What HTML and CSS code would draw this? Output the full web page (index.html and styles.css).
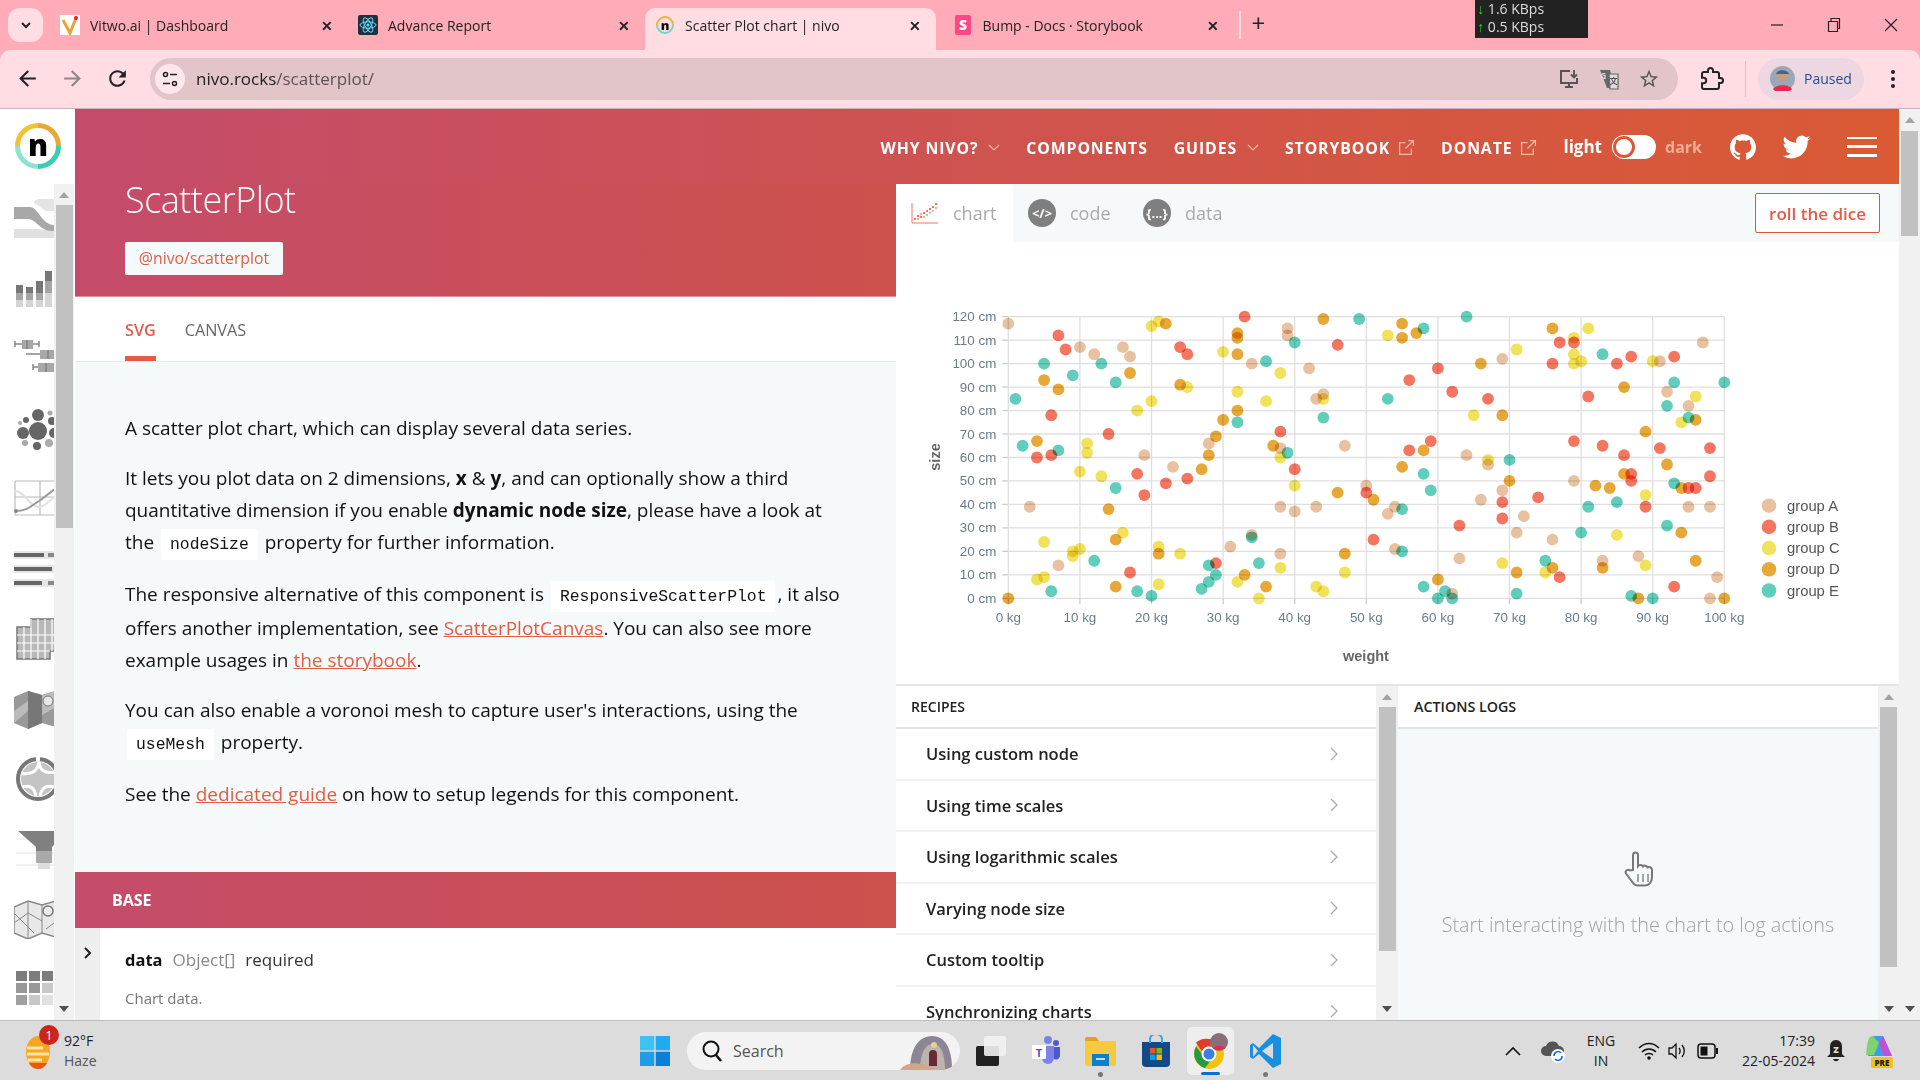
FILE: index.html
```html
<!DOCTYPE html>
<html lang="en">
<head>
    <meta charset="UTF-8">
    <meta name="viewport" content="width=device-width, initial-scale=1.0">
    <title>Scatter Plot chart | nivo</title>
    <link rel="stylesheet" href="styles.css">
</head>
<body>
    <!-- Browser tabs -->
    <div class="tabstrip">
        <div class="tab-menu"><svg width="14" height="14" viewBox="0 0 14 14"><path d="M3 5l4 4 4-4" fill="none" stroke="#222" stroke-width="2"/></svg></div>
        <div class="tab tab-first">
            <svg class="favicon" viewBox="0 0 20 20"><rect width="20" height="20" fill="#fff"/><path d="M3 5l7 13 6-15" fill="none" stroke="#e8a33a" stroke-width="3"/><circle cx="16" cy="3" r="2" fill="#d8232a"/></svg>
            <span class="tab-title">Vitwo.ai | Dashboard</span>
            <span class="tab-close">✕</span>
        </div>
        <div class="tab tab-second">
            <svg class="favicon" viewBox="0 0 20 20"><rect width="20" height="20" rx="2" fill="#20303a"/><g fill="none" stroke="#61dafb" stroke-width="1"><ellipse cx="10" cy="10" rx="8" ry="3.2"/><ellipse cx="10" cy="10" rx="8" ry="3.2" transform="rotate(60 10 10)"/><ellipse cx="10" cy="10" rx="8" ry="3.2" transform="rotate(120 10 10)"/></g><circle cx="10" cy="10" r="1.6" fill="#61dafb"/></svg>
            <span class="tab-title">Advance Report</span>
            <span class="tab-close">✕</span>
        </div>
        <div class="tab tab-active">
            <svg class="favicon" viewBox="0 0 20 20"><path d="M2 10a8 8 0 0 1 16 0" fill="none" stroke="#edb53a" stroke-width="2"/><path d="M2 10a8 8 0 0 0 16 0" fill="none" stroke="#6fd8c4" stroke-width="2"/><text x="10" y="14.5" class="favicon-n">n</text></svg>
            <span class="tab-title">Scatter Plot chart | nivo</span>
            <span class="tab-close">✕</span>
        </div>
        <div class="tab tab-last">
            <svg class="favicon" viewBox="0 0 20 20"><rect x="2" width="16" height="20" rx="2" fill="#ff4785"/><text x="10" y="15" class="favicon-s">S</text></svg>
            <span class="tab-title">Bump - Docs · Storybook</span>
            <span class="tab-close">✕</span>
        </div>
        <span class="tab-new">+</span>
        <div class="net-meter">
            <div><i class="net-down">↓</i> 1.6 KBps</div>
            <div><i class="net-up">↑</i> 0.5 KBps</div>
        </div>
        <div class="window-controls">
            <svg width="14" height="14" viewBox="0 0 14 14"><path d="M1 7h12" stroke="#222" stroke-width="1.2"/></svg>
            <svg width="14" height="16" viewBox="0 0 14 16"><path d="M1.500 4.500h9v10h-9zM4 4.500V1.500h8.500v10h-2" fill="none" stroke="#222" stroke-width="1.200"/></svg>
            <svg width="14" height="14" viewBox="0 0 14 14"><path d="M1 1l12 12M13 1L1 13" stroke="#222" stroke-width="1.2"/></svg>
        </div>
    </div>

    <!-- Browser toolbar -->
    <div class="toolbar">
        <svg class="tool-icon" viewBox="0 0 24 24"><path d="M20 11H7.830l5.590-5.590L12 4l-8 8 8 8 1.410-1.410L7.830 13H20v-2z"/></svg>
        <svg class="tool-icon tool-off" viewBox="0 0 24 24"><path d="M12 4l-1.410 1.410L16.170 11H4v2h12.170l-5.580 5.590L12 20l8-8z"/></svg>
        <svg class="tool-icon" viewBox="0 0 24 24"><path d="M17.650 6.350C16.200 4.900 14.210 4 12 4c-4.420 0-7.990 3.580-7.990 8s3.570 8 7.990 8c3.730 0 6.840-2.550 7.730-6h-2.080c-.82 2.330-3.040 4-5.650 4-3.310 0-6-2.690-6-6s2.690-6 6-6c1.660 0 3.140.69 4.220 1.780L13 11h7V4l-2.350 2.350z"/></svg>
        <div class="address-bar">
            <span class="site-info"><svg width="18" height="18" viewBox="0 0 18 18"><g fill="none" stroke="#222" stroke-width="1.500"><circle cx="4.500" cy="4.500" r="2"/><circle cx="13.500" cy="13.500" r="2"/><path d="M9 4.500h7M2 13.500h7"/></g></svg></span>
            <span class="url">nivo.rocks<span class="url-path">/scatterplot/</span></span>
            <div class="address-actions">
                <svg width="22" height="22" viewBox="0 0 22 22"><path d="M12 3H3v12h16v-5M7 19h8M11 15v4" fill="none" stroke="#555" stroke-width="2"/><path d="M16 2v7M13 6.500l3 3 3-3" fill="none" stroke="#555" stroke-width="1.800"/></svg>
                <svg width="22" height="22" viewBox="0 0 22 22"><path d="M2 2h10l5 18h-8z" fill="#666"/><path d="M11 6h9v15h-8z" fill="#ddd" stroke="#666" stroke-width="1.200"/><text x="5.500" y="11" class="translate-g">G</text><text x="15.500" y="16" class="translate-a">文</text></svg>
                <svg width="22" height="22" viewBox="0 0 24 24"><path fill="#555" d="M22 9.240l-7.190-.62L12 2 9.190 8.630 2 9.240l5.460 4.730L5.820 21 12 17.270 18.180 21l-1.630-7.030L22 9.240zM12 15.400l-3.760 2.270 1-4.280-3.320-2.880 4.380-.38L12 6.100l1.710 4.040 4.380.38-3.320 2.880 1 4.280L12 15.400z"/></svg>
            </div>
        </div>
        <svg class="extension-icon" width="24" height="24" viewBox="0 0 24 24"><path d="M20.500 11H19V7c0-1.100-.9-2-2-2h-4V3.500C13 2.120 11.880 1 10.500 1S8 2.120 8 3.500V5H4c-1.100 0-1.990.9-1.990 2v3.800H3.500c1.490 0 2.700 1.210 2.700 2.700s-1.210 2.700-2.700 2.700H2V20c0 1.100.9 2 2 2h13c1.100 0 2-.9 2-2v-4h1.500c1.380 0 2.500-1.120 2.500-2.500S21.880 11 20.500 11z" fill="none" stroke="#222" stroke-width="2"/></svg>
        <span class="toolbar-sep"></span>
        <div class="profile-pill">
            <svg width="25" height="25" viewBox="0 0 25 25"><circle cx="12.500" cy="12.500" r="12.500" fill="#9aa7b5"/><path d="M3 23c3-5 16-5 19 0a12.500 12.500 0 0 1-19 0z" fill="#e8294a"/><circle cx="12.500" cy="10" r="5" fill="#c89a80"/><path d="M6 8c2-5 11-5 13 0z" fill="#46618a"/></svg>
            <span>Paused</span>
        </div>
        <svg class="menu-dots" width="6" height="20" viewBox="0 0 6 20"><circle cx="3" cy="3" r="2" fill="#222"/><circle cx="3" cy="10" r="2" fill="#222"/><circle cx="3" cy="17" r="2" fill="#222"/></svg>
    </div>

    <div class="page">
        <!-- Component list on the left -->
        <div class="sidebar">
            <div class="logo">
                <svg width="48" height="48" viewBox="0 0 48 48">
                    <g fill="none" stroke-width="5">
                        <path d="M3.500 24A20.500 20.500 0 0 1 24 3.500" stroke="#f1c232"/>
                        <path d="M24 3.500A20.500 20.500 0 0 1 44.500 24" stroke="#e8a838"/>
                        <path d="M44.500 24A20.500 20.500 0 0 1 24 44.500" stroke="#3fcbb1"/>
                        <path d="M24 44.500A20.500 20.500 0 0 1 3.500 24" stroke="#8fe2d0"/>
                    </g>
                    <text x="24" y="34" class="logo-n">n</text>
                </svg>
            </div>
            <div class="side-scroll">
                <div class="side-icons">
                    <div class="side-icon"><svg viewBox="0 0 56 40"><path d="M20 4c0-3 3-4 6-4h30v12H32z" fill="#e4e4e4"/><path d="M0 30h24l6 1h26v8H0z" fill="#e0e0e0"/><path d="M0 8h16c8 0 12 18 24 18h16v6H38C26 32 22 20 14 20H0z" fill="#a8a8a8"/></svg></div>
                    <div class="side-icon"><svg viewBox="0 0 56 40"><path d="M2 16h7v8H2zM12 18h7v6h-7zM22 12h7v12h-7zM31 2h7v10h-7zM40 8h7v16h-7z" fill="#777"/><path d="M2 24h7v7H2zM12 24h7v7h-7zM22 24h7v7h-7zM31 12h7v12h-7zM40 24h7v7h-7z" fill="#a5a5a5"/><path d="M2 31h7v7H2zM12 31h7v7h-7zM22 31h7v7h-7zM31 24h7v14h-7zM40 31h7v7h-7z" fill="#d5d5d5"/></svg></div>
                    <div class="side-icon"><svg viewBox="0 0 56 40"><path d="M1 5h24M25 2v6M1 2v6M12 15h44M19 28h30M19 25v6" stroke="#888" stroke-width="1.500" fill="none"/><path d="M8 1h11v9H8zM26 11h24v9H26zM24 24h16v9H24z" fill="#a8a8a8"/><path d="M13 1v9M34 11v9M32 24v9" stroke="#777" stroke-width="1.200"/></svg></div>
                    <div class="side-icon"><svg viewBox="0 0 56 44" fill="#666"><circle cx="24" cy="24" r="9"/><circle cx="9" cy="26" r="6"/><circle cx="24" cy="8" r="6"/><circle cx="38" cy="14" r="4"/><circle cx="40" cy="26" r="5"/><circle cx="23" cy="39" r="4"/><circle cx="12" cy="13" r="3"/><circle cx="6" cy="16" r="2" fill="#aaa"/><circle cx="35" cy="36" r="4" fill="#aaa"/><circle cx="11" cy="36" r="3" fill="#aaa"/><circle cx="36" cy="6" r="2.500" fill="#aaa"/></svg></div>
                    <div class="side-icon"><svg viewBox="0 0 56 40" fill="none"><path d="M1 2h55M1 18h55M1 36h55M1 2v34M26 2v34" stroke="#bbb" stroke-width="1.200"/><path d="M1 12c10 0 14 16 24 16s14-16 30-16" stroke="#e0e0e0" stroke-width="2"/><path d="M1 32c10 0 12-2 24-10s18-16 30-18" stroke="#999" stroke-width="2"/><circle cx="2" cy="32" r="2" fill="#888"/></svg></div>
                    <div class="side-icon"><svg viewBox="0 0 56 40"><path d="M0 2h56v8H0zM0 16h56v8H0zM0 30h56v8H0z" fill="#e6e6e6"/><path d="M0 4h30v4H0zM0 18h38v4H0zM0 32h28v4H0z" fill="#666"/><path d="M34 4h6v4h-6zM44 18h4v4h-4zM34 32h6v4h-6z" fill="#888"/></svg></div>
                    <div class="side-icon side-calendar"><svg viewBox="0 0 56 44"><path d="M3 10h14V2h36v32H36v8H3z" fill="#b8b8b8" stroke="#777" stroke-width="1.500"/><path d="M3 18h50M3 26h50M3 34h33M10 10v32M17 2v40M24 2v40M31 2v40M38 2v32M45 2v32" stroke="#fff" stroke-width="1.200"/></svg></div>
                    <div class="side-icon"><svg viewBox="0 0 56 40"><path d="M0 8l14-6 14 4 14-4 14 4v28l-14 4-14-4-14 6-14-6z" fill="#999"/><path d="M14 2l14 4v28l-14 6z" fill="#777"/><path d="M28 6l14-4v16l-14 8zM0 22l14-10v10L0 34z" fill="#bbb"/><circle cx="34" cy="12" r="5" fill="#e6e6e6" stroke="#777"/></svg></div>
                    <div class="side-icon"><svg viewBox="0 0 56 44" fill="none"><circle cx="24" cy="22" r="17" fill="#c4c4c4"/><circle cx="24" cy="22" r="20" stroke="#777" stroke-width="4"/><path d="M25 5c-1 8-5 12-18 12M25 5c1 8 5 12 16 10M8 30c8-2 12 0 14 9M40 30c-8-2-12 0-14 9" stroke="#fff" stroke-width="3"/><path d="M22 0h4v4h-4z" fill="#fff"/></svg></div>
                    <div class="side-icon"><svg viewBox="0 0 56 44"><path d="M2 12h54M2 26h54M2 38h54" stroke="#e4e4e4" stroke-width="1.200"/><path d="M4 4h50L38 20v4H22v-4z" fill="#808080"/><path d="M22 24h16v12H22z" fill="#aaa"/><path d="M24 36h12v6H24z" fill="#ddd"/></svg></div>
                    <div class="side-icon"><svg viewBox="0 0 56 40"><path d="M0 8l14-6 14 4 14-4 14 4v28l-14 4-14-4-14 6-14-6z" fill="#e8e8e8" stroke="#888" stroke-width="1.500"/><path d="M14 2v38M28 6v28M0 24l14-10 14 8M0 14l20 20M32 30l24-18" stroke="#888" stroke-width="1" fill="none"/><circle cx="34" cy="12" r="5" fill="#eee" stroke="#777" stroke-width="1.500"/></svg></div>
                    <div class="side-icon"><svg viewBox="0 0 56 40"><path d="M2 2h11v10H2zM15 2h11v10H15zM28 2h11v10H28z" fill="#7d7d7d"/><path d="M2 14h11v10H2zM15 14h11v10H15z" fill="#999"/><path d="M28 14h11v10H28zM15 26h11v10H15z" fill="#c8c8c8"/><path d="M2 26h11v10H2z" fill="#a0a0a0"/><path d="M28 26h11v10H28zM41 2h11v10H41z" fill="#e0e0e0"/></svg></div>
                </div>
                <div class="scrollbar scrollbar-side">
                    <span class="arrow-up"></span>
                    <span class="thumb thumb-side"></span>
                    <span class="arrow-down"></span>
                </div>
            </div>
        </div>

        <div class="main">
            <!-- Site navigation -->
            <div class="topnav">
                <a>WHY NIVO? <svg class="nav-chevron" viewBox="0 0 12 8"><path d="M1 1l5 5 5-5"/></svg></a>
                <a>COMPONENTS</a>
                <a>GUIDES <svg class="nav-chevron" viewBox="0 0 12 8"><path d="M1 1l5 5 5-5"/></svg></a>
                <a>STORYBOOK <svg class="nav-ext" viewBox="0 0 16 16"><path d="M12.500 9v5.500h-11v-11H7M9.500 1.500h5v5M14.500 1.500L7 9"/></svg></a>
                <a>DONATE <svg class="nav-ext" viewBox="0 0 16 16"><path d="M12.500 9v5.500h-11v-11H7M9.500 1.500h5v5M14.500 1.500L7 9"/></svg></a>
                <span class="theme-light">light</span>
                <span class="theme-toggle"><span class="theme-knob"></span></span>
                <span class="theme-dark">dark</span>
                <svg class="nav-github" viewBox="0 0 24 24"><path d="M12 .297c-6.630 0-12 5.373-12 12 0 5.303 3.438 9.800 8.205 11.385.6.113.82-.258.82-.577 0-.285-.01-1.040-.015-2.040-3.338.724-4.042-1.610-4.042-1.610C4.422 18.070 3.633 17.700 3.633 17.700c-1.087-.744.084-.729.084-.729 1.205.084 1.838 1.236 1.838 1.236 1.070 1.835 2.809 1.305 3.495.998.108-.776.417-1.305.76-1.605-2.665-.3-5.466-1.332-5.466-5.930 0-1.310.465-2.380 1.235-3.220-.135-.303-.54-1.523.105-3.176 0 0 1.005-.322 3.300 1.230.96-.267 1.980-.399 3-.405 1.020.006 2.040.138 3 .405 2.280-1.552 3.285-1.230 3.285-1.230.645 1.653.24 2.873.12 3.176.765.84 1.230 1.910 1.230 3.220 0 4.610-2.805 5.625-5.475 5.920.42.36.81 1.096.81 2.220 0 1.606-.015 2.896-.015 3.286 0 .315.21.69.825.57C20.565 22.092 24 17.592 24 12.297c0-6.627-5.373-12-12-12"/></svg>
                <svg class="nav-twitter" viewBox="0 0 24 24"><path d="M23.953 4.570a10 10 0 01-2.825.775 4.958 4.958 0 002.163-2.723c-.951.555-2.005.959-3.127 1.184a4.920 4.920 0 00-8.384 4.482C7.690 8.095 4.067 6.130 1.640 3.162a4.822 4.822 0 00-.666 2.475c0 1.710.87 3.213 2.188 4.096a4.904 4.904 0 01-2.228-.616v.06a4.923 4.923 0 003.946 4.827 4.996 4.996 0 01-2.212.085 4.936 4.936 0 004.604 3.417 9.867 9.867 0 01-6.102 2.105c-.39 0-.779-.023-1.170-.067a13.995 13.995 0 007.557 2.209c9.053 0 13.998-7.496 13.998-13.985 0-.21 0-.42-.015-.63A9.935 9.935 0 0024 4.590z"/></svg>
                <span class="nav-burger"><i></i><i></i><i></i></span>
            </div>

            <div class="columns">
                <!-- Documentation column -->
                <div class="doc">
                    <div class="doc-head">
                        <h1>ScatterPlot</h1>
                        <span class="package-tag">@nivo/scatterplot</span>
                    </div>
                    <div class="doc-tabs">
                        <span class="doc-tab doc-tab-active">SVG</span>
                        <span class="doc-tab">CANVAS</span>
                    </div>
                    <div class="doc-intro">
                        <p>A scatter plot chart, which can display several data series.</p>
                        <p>It lets you plot data on 2 dimensions, <b>x</b> &amp; <b>y</b>, and can optionally show a third quantitative dimension if you enable <b>dynamic node size</b>, please have a look at the <code>nodeSize</code> property for further information.</p>
                        <p>The responsive alternative of this component is <code>ResponsiveScatterPlot</code>, it also offers another implementation, see <a>ScatterPlotCanvas</a>. You can also see more example usages in <a>the storybook</a>.</p>
                        <p>You can also enable a voronoi mesh to capture user's interactions, using the <code>useMesh</code> property.</p>
                        <p>See the <a>dedicated guide</a> on how to setup legends for this component.</p>
                    </div>
                    <div class="group-bar">BASE</div>
                    <div class="prop-row">
                        <div class="prop-toggle"><svg width="10" height="14" viewBox="0 0 10 14"><path d="M2 2l5 5-5 5" fill="none" stroke="#222" stroke-width="2"/></svg></div>
                        <div class="prop-body">
                            <div class="prop-title"><b>data</b><span class="prop-type">Object[]</span><span class="prop-req">required</span></div>
                            <div class="prop-desc">Chart data.</div>
                        </div>
                    </div>
                </div>

                <!-- Chart and panels column -->
                <div class="demo">
                    <div class="demo-tabs">
                        <div class="demo-tab demo-tab-active">
                            <svg width="28" height="22" viewBox="0 0 28 22"><path d="M1 1v20h26" fill="none" stroke="#f47560" stroke-width="1"/><g fill="#f47560"><rect x="3" y="16" width="2" height="2"/><rect x="6" y="13" width="2" height="2"/><rect x="6" y="16" width="2" height="2" opacity=".6"/><rect x="9" y="11" width="2" height="2" opacity=".6"/><rect x="9" y="14" width="2" height="2"/><rect x="12" y="14" width="2" height="2" opacity=".6"/><rect x="12" y="10" width="2" height="2"/><rect x="15" y="12" width="2" height="2" opacity=".6"/><rect x="15" y="8" width="2" height="2"/><rect x="18" y="6" width="2" height="2"/><rect x="18" y="10" width="2" height="2" opacity=".6"/><rect x="21" y="4" width="2" height="2"/><rect x="21" y="8" width="2" height="2" opacity=".6"/><rect x="24" y="1" width="2" height="2"/><rect x="24" y="5" width="2" height="2" opacity=".6"/></g></svg>
                            <span>chart</span>
                        </div>
                        <div class="demo-tab">
                            <span class="demo-badge">&lt;/&gt;</span>
                            <span>code</span>
                        </div>
                        <div class="demo-tab">
                            <span class="demo-badge">{...}</span>
                            <span>data</span>
                        </div>
                        <button class="roll-btn">roll the dice</button>
                    </div>
                    <div class="chart-wrap">
                        <svg id="chart" width="1003" height="442" viewBox="0 0 1003 442"></svg>
                    </div>
                    <div class="panels">
                        <div class="panel panel-recipes">
                            <div class="panel-head">RECIPES</div>
                            <div class="recipe">Using custom node<svg class="recipe-chevron" viewBox="0 0 8 14"><path d="M1 1l6 6-6 6"/></svg></div>
                            <div class="recipe">Using time scales<svg class="recipe-chevron" viewBox="0 0 8 14"><path d="M1 1l6 6-6 6"/></svg></div>
                            <div class="recipe">Using logarithmic scales<svg class="recipe-chevron" viewBox="0 0 8 14"><path d="M1 1l6 6-6 6"/></svg></div>
                            <div class="recipe">Varying node size<svg class="recipe-chevron" viewBox="0 0 8 14"><path d="M1 1l6 6-6 6"/></svg></div>
                            <div class="recipe">Custom tooltip<svg class="recipe-chevron" viewBox="0 0 8 14"><path d="M1 1l6 6-6 6"/></svg></div>
                            <div class="recipe">Synchronizing charts<svg class="recipe-chevron" viewBox="0 0 8 14"><path d="M1 1l6 6-6 6"/></svg></div>
                        </div>
                        <div class="scrollbar scrollbar-panel">
                            <span class="arrow-up"></span>
                            <span class="thumb thumb-recipes"></span>
                            <span class="arrow-down"></span>
                        </div>
                        <div class="panel panel-logs">
                            <div class="panel-head">ACTIONS LOGS</div>
                            <div class="logs-empty">
                                <svg width="32" height="36" viewBox="0 0 32 36"><path d="M11 19V4a2.500 2.500 0 0 1 5 0v11c1-1.500 4-1.500 5 .5 1-1.500 4-1 4.500 1 1.500-1 4.500-.5 4.500 2.500v7c0 5-3 8.500-7 8.500h-7c-3 0-4.500-1.500-6-4l-6-8c-1.500-2.500 2-5 4-3z" fill="none" stroke="#777" stroke-width="2"/><path d="M16 23v8M21 23v8M26 23v8" stroke="#888" stroke-width="1.500"/></svg>
                                <span>Start interacting with the chart to log actions</span>
                            </div>
                        </div>
                        <div class="scrollbar scrollbar-panel scrollbar-logs">
                            <span class="arrow-up"></span>
                            <span class="thumb thumb-logs"></span>
                            <span class="arrow-down"></span>
                        </div>
                    </div>
                </div>
            </div>
        </div>

        <div class="scrollbar scrollbar-page">
            <span class="arrow-up"></span>
            <span class="thumb thumb-page"></span>
            <span class="arrow-down"></span>
        </div>
    </div>

    <!-- Windows taskbar -->
    <div class="taskbar">
        <div class="tb-weather">
            <span class="weather-icon">
                <svg width="28" height="38" viewBox="0 0 28 38"><ellipse cx="13" cy="20" rx="12" ry="16" fill="#f5a623"/><path d="M2 16h16M2 22h22M3 28h14" stroke="#fde3a7" stroke-width="3"/><path d="M4 31h18c-2 4-5 6-9 6s-7-2-9-6z" fill="#e8590c"/></svg>
                <span class="weather-badge">1</span>
            </span>
            <span class="weather-text"><span>92°F</span><span>Haze</span></span>
        </div>
        <svg class="tb-win" width="30" height="30" viewBox="0 0 30 30"><rect width="14.300" height="14.300" fill="#3cc3f5"/><rect x="15.700" width="14.300" height="14.300" fill="#22aaf0"/><rect y="15.700" width="14.300" height="14.300" fill="#1e9ce8"/><rect x="15.700" y="15.700" width="14.300" height="14.300" fill="#0a7fd8"/></svg>
        <div class="tb-search">
            <svg width="22" height="24" viewBox="0 0 22 24"><circle cx="10" cy="10" r="7.500" fill="none" stroke="#111" stroke-width="2"/><path d="M15 16l5 6" stroke="#111" stroke-width="2.500"/></svg>
            <span>Search</span>
            <svg class="search-art" width="60" height="36" viewBox="0 0 60 36"><path d="M12 36c0-20 8-34 22-34s20 14 20 34z" fill="#8d8594"/><path d="M22 36c0-16 5-26 13-26s12 10 12 26z" fill="#bdb3ad"/><path d="M31 32V20a4 4 0 0 1 8 0v12z" fill="#6a2a35"/><path d="M2 36c4-6 12-8 22-6l16 6z" fill="#cfa78c"/><circle cx="36" cy="11" r="3" fill="#e5d08f"/></svg>
        </div>
        <div class="tb-app tb-taskview"><svg width="30" height="30" viewBox="0 0 30 30"><rect x="0" y="10" width="23" height="20" rx="2" fill="#222"/><rect x="8" y="0" width="22" height="20" rx="2" fill="#f2f2f2" opacity=".9"/></svg></div>
        <div class="tb-app tb-teams"><svg width="28" height="30" viewBox="0 0 28 30"><circle cx="16" cy="4" r="4" fill="#7b83eb"/><circle cx="24" cy="7" r="3" fill="#5059c9"/><path d="M10 10h12v12a6 6 0 0 1-12 0z" fill="#7b83eb"/><path d="M22 11h6v9a4 4 0 0 1-6 3z" fill="#5059c9"/><rect y="9" width="14" height="14" rx="1" fill="#fff"/><text x="7" y="20.500" class="teams-t">T</text></svg></div>
        <div class="tb-app tb-dotted"><svg width="31" height="30" viewBox="0 0 31 30"><path d="M0 3a2 2 0 0 1 2-2h9l3 4H0z" fill="#d9a21f"/><path d="M0 5h31v23a2 2 0 0 1-2 2H2a2 2 0 0 1-2-2z" fill="#f7c93e"/><path d="M7 18h17v12H7z" fill="#0c7fd1"/><path d="M11 23h9" stroke="#bfe0f8" stroke-width="2"/></svg><i class="app-dot"></i></div>
        <div class="tb-app tb-store"><svg width="30" height="32" viewBox="0 0 30 32"><path d="M1 7h28v21a4 4 0 0 1-4 4H5a4 4 0 0 1-4-4z" fill="#144a85"/><path d="M9 8V4a6 5 0 0 1 12 0v4" fill="none" stroke="#2fa6e8" stroke-width="2"/><rect x="9" y="13" width="5.500" height="5.500" fill="#f25022"/><rect x="15.500" y="13" width="5.500" height="5.500" fill="#7fba00"/><rect x="9" y="19.500" width="5.500" height="5.500" fill="#00a4ef"/><rect x="15.500" y="19.500" width="5.500" height="5.500" fill="#ffb900"/></svg></div>
        <div class="tb-app tb-chrome"><svg width="34" height="36" viewBox="0 0 34 36"><circle cx="15" cy="21" r="15" fill="#f4c20d"/><path d="M15 6a15 15 0 0 1 13 7.500H15a7.500 7.500 0 0 0-7 5L2 9.500A15 15 0 0 1 15 6z" fill="#e33b2e"/><path d="M2 13.500a15 15 0 0 0 9 21.500l6-8a7.500 7.500 0 0 1-9-6z" fill="#269a43"/><circle cx="15" cy="21" r="7.500" fill="#fff"/><circle cx="15" cy="21" r="5.500" fill="#3c7ee8"/><circle cx="25" cy="9" r="9" fill="#8a6f78"/><path d="M19 15c3-3 9-3 12 0a9 9 0 0 1-12 0z" fill="#e8294a"/></svg><i class="app-bar"></i></div>
        <div class="tb-app tb-dotted tb-code"><svg width="31" height="34" viewBox="0 0 31 34"><path d="M23 0l8 4v26l-8 4L9 20l-6 5-3-2v-12l3-2 6 5z" fill="#1a8fe0"/><path d="M23 9L12 17l11 8z" fill="#dcdcdc"/><path d="M3 11l5 6-5 6z" fill="#dcdcdc"/></svg><i class="app-dot"></i></div>
        <div class="tb-tray">
            <svg class="tray-chevron" width="16" height="10" viewBox="0 0 16 10"><path d="M1 9l7-7 7 7" fill="none" stroke="#111" stroke-width="1.600"/></svg>
            <svg class="tray-cloud" width="24" height="26" viewBox="0 0 24 26"><path d="M5 18a5 5 0 0 1 0-10 7 7 0 0 1 13 0 5 5 0 0 1 0 10z" fill="#555"/><circle cx="17" cy="18" r="7" fill="#fff"/><path d="M13 18a4 4 0 0 1 7-3M21 18a4 4 0 0 1-7 3" fill="none" stroke="#1a73d8" stroke-width="1.600"/></svg>
            <div class="tray-lang"><span>ENG</span><span>IN</span></div>
            <svg class="tray-wifi" width="22" height="20" viewBox="0 0 22 20"><path d="M1 7c6-6 14-6 20 0M4 11c4-4 10-4 14 0M7 14c2-2 6-2 8 0" fill="none" stroke="#111" stroke-width="1.500"/><circle cx="11" cy="17" r="1.800" fill="#111"/></svg>
            <svg class="tray-volume" width="20" height="20" viewBox="0 0 20 20"><path d="M1 7h3l4-4v14l-4-4H1z" fill="none" stroke="#111" stroke-width="1.300"/><path d="M11 7c1.500 2 1.500 4 0 6M14 4c3 3.500 3 8.500 0 12" fill="none" stroke="#111" stroke-width="1.300"/></svg>
            <svg class="tray-battery" width="22" height="16" viewBox="0 0 22 16"><rect x="1" y="1" width="17" height="14" rx="3" fill="none" stroke="#111" stroke-width="1.500"/><rect x="3.500" y="3.500" width="7" height="9" fill="#111"/><rect x="19" y="5" width="2" height="6" fill="#111"/></svg>
            <div class="tray-clock"><span>17:39</span><span>22-05-2024</span></div>
            <svg class="tray-bell" width="20" height="26" viewBox="0 0 20 26"><path d="M10 2c-4 0-6 3-6 7v7l-3 3h18l-3-3V9c0-4-2-7-6-7z" fill="#222"/><path d="M7 21c1 3 5 3 6 0z" fill="#222"/><text x="10" y="15" class="bell-z">Z</text></svg>
            <svg class="tray-copilot" width="30" height="36" viewBox="0 0 30 36"><path d="M8 3h10l9 20H3z" fill="#3d9be9"/><path d="M8 3c-4 0-5 4-6 10l-1 9h8l5-12z" fill="#7fd36f"/><path d="M14 10l4-7 9 20h-8z" fill="#c24fd8"/><rect x="6" y="24" width="22" height="11" rx="1.500" fill="#f2c21a"/><text x="17" y="33" class="copilot-pre">PRE</text></svg>
        </div>
    </div>

    <script src="chart.js"></script>
</body>
</html>
```
FILE: styles.css
```css
* {
    box-sizing: border-box;
}
html, body {
    margin: 0;
    height: 100%;
}
body {
    width: 1920px;
    height: 1080px;
    overflow: hidden;
    display: flex;
    flex-direction: column;
    font-family: "Open Sans", "Noto Sans", sans-serif;
    color: #111;
    background-color: #ffabb8;
}

/* Browser tabs */
.tabstrip {
    height: 50px;
    flex: none;
    display: flex;
    background-color: #ffabb8;
}
.tab-menu {
    width: 35px;
    height: 34px;
    margin: 8px 0 0 8px;
    border-radius: 12px;
    background-color: #ffdde3;
    display: flex;
    align-items: center;
    justify-content: center;
}
.tab {
    width: 298px;
    margin-top: 8px;
    padding: 0 15px 8px 10px;
    display: flex;
    align-items: center;
    font-size: 14px;
    color: #222;
}
.tab-first {
    margin-left: 7px;
}
.tab-second {
    width: 297px;
}
.tab-active {
    width: 291px;
    margin-right: 6.500px;
    border-radius: 10px 10px 0 0;
    background-color: #ffdde3;
}
.tab-last {
    width: 296px;
    padding-right: 20px;
}
.favicon {
    width: 20px;
    height: 20px;
    margin-right: 10px;
    flex: none;
}
.favicon-n {
    font: 800 13px "Open Sans", sans-serif;
    text-anchor: middle;
    fill: #111;
}
.favicon-s {
    font: 800 14px "Open Sans", sans-serif;
    text-anchor: middle;
    fill: #fff;
}
.tab-title {
    flex: 1;
    white-space: nowrap;
}
.tab-close {
    font-size: 14px;
    font-weight: 600;
    color: #222;
}
.tab-new {
    height: 28px;
    margin-top: 11px;
    padding-left: 11px;
    font-size: 24px;
    line-height: 24px;
    color: #222;
    border-left: 2px solid #ffdde3;
}
.net-meter {
    width: 113px;
    height: 38px;
    margin-left: 210px;
    padding-left: 2px;
    background-color: #222;
    color: #ddd;
    font-size: 14px;
    line-height: 18px;
}
.net-meter i {
    font-style: normal;
    font-weight: 800;
}
.net-down, .net-up {
    color: #22dd33;
}
.window-controls {
    margin-left: auto;
    width: 150px;
    padding: 0 22px 0 0;
    display: flex;
    justify-content: space-between;
    align-items: center;
}

/* Browser toolbar */
.toolbar {
    height: 59px;
    flex: none;
    display: flex;
    align-items: center;
    padding-bottom: 1px;
    border-bottom: 1px solid #c9b3b7;
    background-color: #ffdde3;
    border-radius: 10px 10px 0 0;
}
.tool-icon {
    width: 25px;
    height: 25px;
    fill: #222;
    margin-left: 15px;
    margin-right: 5px;
}
.tool-off {
    fill: #8f8288;
}
.address-bar {
    width: 1528px;
    height: 42px;
    margin-left: 15px;
    border-radius: 21px;
    background-color: #e2c5c9;
    display: flex;
    align-items: center;
    padding-left: 5px;
}
.site-info {
    width: 30px;
    height: 30px;
    border-radius: 50%;
    background-color: #ffe7eb;
    display: flex;
    align-items: center;
    justify-content: center;
}
.url {
    margin-left: 11px;
    font-size: 17px;
    color: #222;
}
.url-path {
    color: #5c5356;
}
.address-actions {
    margin-left: auto;
    width: 120px;
    padding-right: 18px;
    display: flex;
    justify-content: space-between;
}
.translate-g {
    font: 700 8px "Open Sans", sans-serif;
    fill: #ddd;
    text-anchor: middle;
}
.translate-a {
    font: 700 8px "Noto Sans CJK SC", sans-serif;
    fill: #555;
    text-anchor: middle;
}
.extension-icon {
    margin-left: 22px;
}
.toolbar-sep {
    width: 1px;
    height: 36px;
    margin-left: 21px;
    background-color: #f7b3bf;
}
.profile-pill {
    width: 106px;
    height: 42px;
    margin-left: 12px;
    padding-left: 12px;
    border-radius: 21px;
    background-color: #ecd7e2;
    display: flex;
    align-items: center;
    gap: 9px;
    font-size: 14px;
    color: #274a9c;
}
.menu-dots {
    margin-left: 26px;
}

/* Page */
.page {
    height: 911px;
    flex: none;
    display: flex;
    background-color: #fff;
}
.sidebar {
    width: 75px;
    flex: none;
    display: flex;
    flex-direction: column;
    background-color: #fff;
}
.logo {
    height: 75px;
    flex: none;
    padding: 13px 0 0 14px;
}
.logo-n {
    font: 800 30px "Open Sans", sans-serif;
    text-anchor: middle;
    fill: #000;
}
.side-scroll {
    flex: 1;
    min-height: 0;
    display: flex;
}
.side-icons {
    width: 54px;
    overflow: hidden;
    flex: none;
}
.side-icon {
    height: 70px;
    padding-left: 14px;
    display: flex;
    align-items: center;
}
.side-icon svg {
    width: 56px;
    flex: none;
}

/* Scrollbars */
.scrollbar {
    display: flex;
    flex-direction: column;
    align-items: center;
    background-color: #f1f1f1;
    flex: none;
}
.arrow-up, .arrow-down {
    width: 0;
    height: 0;
    border-left: 5px solid transparent;
    border-right: 5px solid transparent;
    flex: none;
}
.arrow-up {
    margin-top: 8px;
    border-bottom: 6px solid #a3a3a3;
}
.arrow-down {
    margin-top: auto;
    margin-bottom: 8px;
    border-top: 6px solid #505050;
}
.thumb {
    background-color: #c1c1c1;
    flex: none;
}
.scrollbar-side {
    width: 20px;
}
.thumb-side {
    width: 17px;
    height: 323px;
    margin-top: 7px;
}
.scrollbar-page {
    width: 21px;
}
.thumb-page {
    width: 17px;
    height: 105px;
    margin-top: 8px;
}
.scrollbar-panel {
    width: 22px;
}
.scrollbar-logs {
    width: 21px;
}
.thumb-recipes, .thumb-logs {
    width: 17px;
    margin-top: 7px;
}
.thumb-recipes {
    height: 244px;
}
.thumb-logs {
    height: 260px;
}

/* Site navigation */
.main {
    flex: 1;
    min-width: 0;
    display: flex;
    flex-direction: column;
}
.topnav {
    height: 75px;
    flex: none;
    display: flex;
    align-items: center;
    justify-content: flex-end;
    padding-right: 22px;
    background: linear-gradient(90deg, #c44c6a, #da5a34);
    color: #fff;
}
.topnav a {
    font-size: 15.800px;
    font-weight: 700;
    letter-spacing: 0.900px;
    margin-top: 2px;
    margin-right: 26px;
    display: flex;
    align-items: center;
    gap: 6px;
    white-space: nowrap;
}
.nav-chevron {
    width: 12px;
    height: 8px;
    margin-left: 4px;
    fill: none;
    stroke: #f2b8a8;
    stroke-width: 1.200;
}
.nav-ext {
    width: 17px;
    height: 17px;
    margin-left: 2px;
    fill: none;
    stroke: #f2b8a8;
    stroke-width: 1.200;
}
.theme-light {
    font-size: 17px;
    font-weight: 700;
    margin-right: 10px;
}
.theme-dark {
    font-size: 16px;
    font-weight: 700;
    color: #f0ad95;
    margin-left: 9px;
    margin-right: 28px;
}
.theme-toggle {
    width: 44px;
    height: 24px;
    border-radius: 12px;
    background-color: #fff;
    padding: 1px;
}
.theme-knob {
    display: block;
    width: 22px;
    height: 22px;
    border-radius: 50%;
    background-color: #fff;
    border: 3px solid #d9583a;
}
.nav-github {
    width: 26px;
    height: 28px;
    fill: #fff;
    margin-right: 26px;
}
.nav-twitter {
    width: 29px;
    height: 28px;
    fill: #fff;
    margin-right: 36px;
}
.nav-burger {
    width: 30px;
    height: 20px;
    display: flex;
    flex-direction: column;
    justify-content: space-between;
}
.nav-burger i {
    display: block;
    height: 2.500px;
    background-color: #fff;
}

/* Columns */
.columns {
    flex: 1;
    min-height: 0;
    display: flex;
}
.doc {
    width: 821px;
    flex: none;
    background-color: #f6f9fa;
}
.doc-head {
    height: 113px;
    padding: 0 50px;
    background: linear-gradient(90deg, #c44c6a, #cd514c);
    border-bottom: 1px solid #e58d94;
}
.doc-head h1 {
    margin: 0;
    height: 58px;
    line-height: 31px;
    font-size: 36px;
    font-weight: 300;
    color: #fff;
    letter-spacing: -0.5px;
}
.package-tag {
    display: inline-block;
    width: 158px;
    height: 33px;
    line-height: 33px;
    text-align: center;
    font-size: 15.800px;
    color: #e25d47;
    background-color: #f6f9fa;
    border-radius: 2px;
}
.doc-tabs {
    height: 65px;
    display: flex;
    padding: 0 50px;
    gap: 29px;
    background-color: #fff;
    border-bottom: 1px solid #e8e8e8;
}
.doc-tab {
    height: 64px;
    line-height: 64px;
    padding-top: 1px;
    font-size: 16.200px;
    color: #666;
}
.doc-tab-active {
    color: #e25d47;
    font-weight: 600;
    border-bottom: 5px solid #e25d47;
}
.doc-intro {
    height: 510px;
    padding: 50px 50px 0;
    font-size: 19px;
    line-height: 32px;
}
.doc-intro p {
    margin: 0 0 18px;
}
.doc-intro a {
    color: #e25d47;
    text-decoration: underline;
}
.doc-intro code {
    display: inline-block;
    height: 31px;
    line-height: 31px;
    padding: 0 9px;
    margin: 0 2px;
    font-family: "Liberation Mono", monospace;
    font-size: 16.400px;
    background-color: #fff;
    border-radius: 2px;
}
.group-bar {
    height: 56px;
    line-height: 56px;
    padding-left: 37px;
    font-size: 16px;
    font-weight: 700;
    color: #fff;
    background: linear-gradient(90deg, #c44c6a, #cd514c);
}
.prop-row {
    display: flex;
    height: 92px;
    background-color: #fff;
}
.prop-toggle {
    width: 25px;
    flex: none;
    background-color: #eee;
    padding: 15px 0 0 8px;
}
.prop-body {
    padding: 20px 0 0 25px;
}
.prop-title {
    display: flex;
    gap: 10px;
    font-size: 17px;
    line-height: 24px;
}
.prop-title b {
    font-size: 16.500px;
}
.prop-type {
    color: #888;
}
.prop-req {
    color: #333;
}
.prop-desc {
    margin-top: 16px;
    font-size: 15px;
    color: #777;
}

/* Chart column */
.demo {
    flex: 1;
    min-width: 0;
    display: flex;
    flex-direction: column;
    background-color: #fff;
}
.demo-tabs {
    height: 58px;
    flex: none;
    display: flex;
    align-items: center;
    background-color: #f6f9fa;
}
.demo-tab {
    height: 58px;
    display: flex;
    align-items: center;
    gap: 14px;
    padding-left: 15px;
    width: 115px;
    font-size: 18px;
    color: #aaa;
}
.demo-tab-active {
    width: 117px;
    background-color: #fff;
}
.demo-badge {
    width: 28px;
    height: 28px;
    border-radius: 50%;
    background-color: #7f7f7f;
    color: #fff;
    font-size: 13px;
    font-weight: 700;
    display: flex;
    align-items: center;
    justify-content: center;
}
.roll-btn {
    margin-left: auto;
    margin-right: 19px;
    width: 125px;
    height: 40px;
    padding: 0;
    font: 600 17px "Open Sans", sans-serif;
    color: #e25d47;
    background-color: #fff;
    border: 1px solid #dc5a32;
    border-radius: 2px;
}
.chart-wrap {
    height: 444px;
    flex: none;
    border-bottom: 2px solid #e4e4e4;
}
#chart {
    display: block;
    font-family: "Liberation Sans", Arial, sans-serif;
}
.grid-line {
    stroke: #dfdfdf;
    stroke-width: 1.300;
}
.tick-line {
    stroke: #c8ccd0;
    stroke-width: 1.300;
}
.tick-label {
    font-size: 13.400px;
    fill: #6a7c89;
}
.axis-legend {
    font-size: 14.500px;
    font-weight: 700;
    fill: #666;
    text-anchor: middle;
}
.legend-label {
    font-size: 14.800px;
    fill: #555;
}
.node {
    mix-blend-mode: multiply;
}
.series-a { fill: #e8c1a0; }
.series-b { fill: #f47560; }
.series-c { fill: #f1e15b; }
.series-d { fill: #e8a838; }
.series-e { fill: #61cdbb; }

/* Panels under the chart */
.panels {
    flex: 1;
    min-height: 0;
    display: flex;
}
.panel {
    width: 480px;
    flex: none;
    overflow: hidden;
}
.panel-recipes {
    background-color: #fff;
}
.panel-logs {
    background-color: #f6f9fa;
    display: flex;
    flex-direction: column;
}
.panel-head {
    height: 43px;
    line-height: 42px;
    flex: none;
    padding-left: 15px;
    font-size: 14px;
    font-weight: 600;
    color: #222;
    background-color: #fff;
    border-bottom: 2px solid #e4e4e4;
}
.panel-logs .panel-head {
    padding-left: 16px;
    font-size: 14.300px;
}
.recipe {
    height: 51.500px;
    padding: 0 38px 0 30px;
    display: flex;
    align-items: center;
    justify-content: space-between;
    font-size: 16.500px;
    font-weight: 600;
    color: #222;
    border-bottom: 2px solid #f1f1f1;
}
.recipe-chevron {
    width: 8px;
    height: 14px;
    fill: none;
    stroke: #aaa;
    stroke-width: 1.300;
}
.logs-empty {
    flex: 1;
    display: flex;
    flex-direction: column;
    align-items: center;
    padding-top: 122px;
    gap: 24px;
    font-size: 19.800px;
    font-weight: 300;
    color: #a0a0a0;
}

/* Windows taskbar */
.taskbar {
    height: 60px;
    flex: none;
    display: flex;
    align-items: center;
    background-color: #dcdcdc;
    border-top: 1px solid #bdbdbd;
    font-size: 14px;
    color: #222;
}
.tb-weather {
    width: 640px;
    flex: none;
    padding-left: 25px;
    display: flex;
    align-items: center;
}
.weather-icon {
    position: relative;
    width: 39px;
    height: 38px;
}
.weather-badge {
    position: absolute;
    left: 14px;
    top: -7px;
    width: 20px;
    height: 20px;
    border-radius: 50%;
    background-color: #c9261c;
    color: #fff;
    font-size: 13px;
    line-height: 20px;
    text-align: center;
}
.weather-text {
    display: flex;
    flex-direction: column;
    gap: 1px;
    line-height: 19px;
}
.weather-text span + span {
    color: #555;
}
.tb-search {
    width: 273px;
    height: 38px;
    margin-left: 17px;
    padding-left: 14px;
    border-radius: 19px;
    background-color: #f3f3f3;
    display: flex;
    align-items: center;
    gap: 10px;
    font-size: 16px;
    color: #555;
    position: relative;
    overflow: hidden;
}
.search-art {
    position: absolute;
    right: 2px;
    top: 2px;
}
.tb-app {
    position: relative;
    display: flex;
    align-items: center;
    justify-content: center;
    height: 48px;
    flex: none;
}
.tb-taskview {
    width: 30px;
    margin-left: 16px;
}
.tb-teams {
    width: 28px;
    margin-left: 26px;
}
.tb-dotted {
    width: 31px;
    margin-left: 25px;
}
.tb-store {
    width: 30px;
    margin-left: 25px;
}
.tb-chrome {
    width: 47px;
    margin-left: 16px;
    border-radius: 5px;
    background-color: #eeeeee;
}
.tb-code {
    margin-left: 16px;
}
.app-dot {
    position: absolute;
    bottom: -2px;
    left: 13px;
    width: 5px;
    height: 5px;
    border-radius: 50%;
    background-color: #777;
}
.app-bar {
    position: absolute;
    bottom: 0;
    left: 14px;
    width: 19px;
    height: 3px;
    border-radius: 2px;
    background-color: #0a6fd1;
}
.tb-tray {
    margin-left: auto;
    width: 417px;
    padding-right: 25px;
    display: flex;
    align-items: center;
}
.tray-chevron {
    margin-left: 2px;
}
.tray-cloud {
    margin-left: 20px;
}
.tray-lang {
    width: 44px;
    margin-left: 14px;
    text-align: center;
    display: flex;
    flex-direction: column;
    line-height: 20px;
}
.tray-wifi {
    margin-left: 15px;
}
.tray-volume {
    margin-left: 8px;
}
.tray-battery {
    margin-left: 9px;
}
.tray-clock {
    width: 96px;
    text-align: right;
    display: flex;
    flex-direction: column;
    line-height: 20px;
}
.tray-bell {
    margin-left: 11px;
}
.tray-copilot {
    margin-left: 19px;
}
.teams-t {
    font: 700 11px "Open Sans", sans-serif;
    text-anchor: middle;
    fill: #4b53bc;
}
.bell-z {
    font: 800 9px "Open Sans", sans-serif;
    text-anchor: middle;
    fill: #dcdcdc;
}
.copilot-pre {
    font: 800 8px "Open Sans", sans-serif;
    text-anchor: middle;
    fill: #222;
}
```
FILE: chart.js
```js
// Scatter plot data, read as [weight in kg, size in cm]
var series = {
    a: [[0,117],[10,107],[12,104],[16,107],[17,103],[39,115],[39,112],[34,100],[42,98],[44,87],[43,85],[28,66],[38,64],[47,65],[19,61],[23,56],[3,39],[38,39],[40,37],[43,39],[50,48],[34,27],[31,22],[38,19],[7,14],[97,109],[69,102],[91,101],[92,88],[95,82],[64,61],[67,57],[79,50],[69,46],[66,42],[54,39],[53,36],[95,39],[98,39],[72,35],[71,28],[76,25],[54,21],[63,17],[83,16],[88,18],[99,9],[62,2],[98,0]],
    b: [[33,120],[7,112],[8,106],[24,107],[25,104],[46,108],[6,78],[14,70],[38,71],[4,60],[6,61],[40,55],[18,53],[22,49],[25,51],[19,44],[50,45],[51,25],[29,15],[17,11],[60,98],[56,93],[62,88],[67,85],[81,86],[77,109],[79,109],[76,100],[85,100],[87,103],[93,103],[59,67],[56,63],[79,67],[83,65],[91,64],[98,64],[86,61],[87,53],[87,50],[98,52],[95,47],[96,47],[74,43],[69,41],[89,39],[69,34],[63,31],[77,9],[93,5]],
    c: [[21,118],[20,116],[30,105],[38,96],[25,90],[32,88],[44,85],[20,84],[36,84],[18,80],[11,66],[11,62],[38,60],[10,54],[13,52],[40,48],[16,28],[5,24],[21,22],[10,21],[9,20],[9,18],[24,19],[38,13],[47,11],[5,9],[4,8],[21,6],[32,7],[43,5],[44,3],[35,0],[53,112],[71,106],[81,115],[79,111],[79,104],[79,100],[80,101],[90,101],[96,86],[65,78],[94,75],[67,59],[89,44],[85,27],[69,15],[89,14],[75,11]],
    d: [[44,119],[22,117],[32,113],[32,111],[32,104],[17,96],[5,93],[7,89],[24,91],[32,80],[30,76],[29,69],[4,67],[37,65],[28,61],[27,55],[46,45],[51,42],[14,38],[15,25],[21,19],[47,19],[33,10],[15,5],[36,5],[0,0],[55,117],[55,111],[57,113],[76,115],[66,100],[86,90],[69,78],[96,76],[89,71],[58,63],[55,56],[92,57],[86,53],[70,50],[82,48],[84,47],[94,47],[94,28],[96,16],[76,13],[71,11],[83,13],[60,8],[88,0],[100,0]],
    e: [[49,119],[40,109],[5,100],[13,100],[36,101],[9,95],[15,92],[1,85],[32,75],[44,77],[2,65],[7,63],[39,62],[15,47],[34,26],[12,16],[28,14],[35,15],[29,10],[28,7],[27,4],[18,3],[6,3],[20,1],[58,115],[64,120],[83,104],[93,92],[100,92],[53,85],[92,82],[95,77],[70,59],[58,53],[59,46],[93,49],[85,41],[81,39],[55,38],[92,31],[80,28],[55,20],[75,16],[58,5],[61,3],[60,0],[62,0],[71,2],[87,1],[90,0]]
};

var chart = document.getElementById("chart");
var NS = "http://www.w3.org/2000/svg";

// Plot area inside the svg
var left = 112.3;
var bottom = 356.3;
var kgPx = 7.16;
var cmPx = 2.347;

function add(tag, attrs, text) {
    var el = document.createElementNS(NS, tag);
    for (var key in attrs) {
        el.setAttribute(key, attrs[key]);
    }
    if (text) el.textContent = text;
    chart.appendChild(el);
    return el;
}

function xPos(kg) { return left + kg * kgPx; }
function yPos(cm) { return bottom - cm * cmPx; }

// Grid and ticks
for (var cm = 0; cm <= 120; cm += 10) {
    add("line", { x1: left, x2: xPos(100), y1: yPos(cm), y2: yPos(cm), "class": "grid-line" });
    add("line", { x1: left - 6, x2: left, y1: yPos(cm), y2: yPos(cm), "class": "tick-line" });
    add("text", { x: left - 12, y: yPos(cm) + 4.5, "text-anchor": "end", "class": "tick-label" }, cm + " cm");
}
for (var kg = 0; kg <= 100; kg += 10) {
    add("line", { x1: xPos(kg), x2: xPos(kg), y1: yPos(120), y2: yPos(0), "class": "grid-line" });
    add("line", { x1: xPos(kg), x2: xPos(kg), y1: yPos(0), y2: yPos(0) + 6, "class": "tick-line" });
    add("text", { x: xPos(kg), y: yPos(0) + 24, "text-anchor": "middle", "class": "tick-label" }, kg + " kg");
}

// Axis legends
add("text", { x: 470, y: 419, "class": "axis-legend" }, "weight");
add("text", { transform: "translate(44 215) rotate(-90)", "class": "axis-legend" }, "size");

// Nodes
var keys = ["a", "b", "c", "d", "e"];
var names = ["group A", "group B", "group C", "group D", "group E"];
keys.forEach(function (key) {
    series[key].forEach(function (p) {
        add("circle", { cx: xPos(p[0]), cy: yPos(p[1]), r: 5.9, "class": "node series-" + key });
    });
});

// Legend
keys.forEach(function (key, i) {
    var y = 263.7 + i * 21.2;
    add("circle", { cx: 873, cy: y, r: 7.3, "class": "series-" + key });
    add("text", { x: 891, y: y + 5, "class": "legend-label" }, names[i]);
});
```
